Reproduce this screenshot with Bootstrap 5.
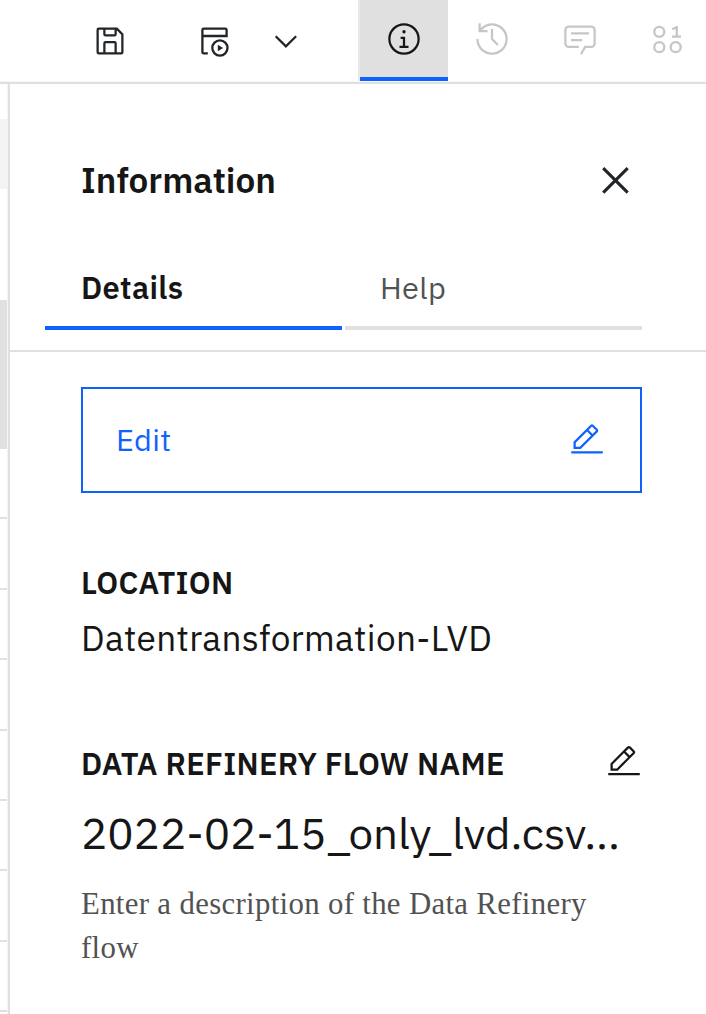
<!DOCTYPE html>
<html lang="en">
<head>
<meta charset="utf-8">
<meta name="viewport" content="width=device-width, initial-scale=1">
<title>Data Refinery</title>
<link rel="stylesheet" href="https://cdn.jsdelivr.net/npm/bootstrap@5.3.0/dist/css/bootstrap.min.css">
<style>
  :root { --ink:#161616; --muted:#525252; --line:#e0e0e0; --blue:#0f62fe; --off:#c6c6c6; }
  body { font-family:"IBM Plex Sans","Noto Sans",sans-serif; color:var(--ink); background:#fff; height:1014px; letter-spacing:.33px; }
  svg { display:block; flex:none; fill:currentColor; }
  button { color:inherit; letter-spacing:inherit; }
  .toolbar { height:84px; border-bottom:2px solid var(--line); box-shadow:inset 0 -1px #f6f6f6; }
  .tools { width:358px; padding-left:91.5px; }
  .tool-tab { width:88px; height:81px; padding-bottom:4px; color:var(--off); flex:none; }
  .tool-tab.active { width:90px; color:var(--ink); background:var(--line); border-left:2px solid #e8e8e8; box-shadow:inset 0 -4px var(--blue); }
  .grid-edge { width:7px; }
  .grid-edge .head { height:70px; margin-top:35px; background:#f4f4f4; }
  .grid-edge .sel { height:149px; margin-top:111px; background:var(--line); }
  .grid-edge .cells { height:565px; background:repeating-linear-gradient(#fff 0 68.4px,var(--line) 68.4px 70.4px); }
  .info-panel { margin-left:1px; border-left:2px solid var(--line); box-shadow:-1px 0 #f4f4f4; }
  .title-row { height:162px; padding:32px 66px 0 71px; }
  .title-row h1 { font-size:35.1px; line-height:44px; font-weight:600; letter-spacing:0; padding-bottom:2px; }
  .panel-tabs { gap:3px; padding:0 64px 20px 35px; border-bottom:2px solid var(--line); }
  .panel-tabs button { width:297px; height:84px; padding:2px 0 0 35px; border-bottom:4px solid var(--line)!important; font-size:30.8px; color:var(--muted); }
  .panel-tabs button.active { padding-left:36px; border-color:var(--blue)!important; color:var(--ink); font-weight:600; }
  .details { padding:35px 64px 0 71px; }
  .edit-btn { height:106px; border:2px solid var(--blue); color:var(--blue); padding:0 35.5px 0 33px; font-size:30.8px; }
  .edit-btn span { padding-bottom:2px; }
  .field-label { font-size:30.8px; line-height:44px; font-weight:600; white-space:nowrap; }
  .location { font-size:35.2px; line-height:50px; margin-top:9px; }
  .flow-name { font-size:44px; line-height:60px; margin-top:18px; white-space:nowrap; letter-spacing:-.09px; }
  .descr { font-family:"Liberation Serif",serif; font-size:30.8px; line-height:44px; color:var(--muted); margin-top:19px; }
</style>
</head>
<body class="d-flex flex-column overflow-hidden">
<header class="toolbar d-flex flex-shrink-0 overflow-hidden">
  <div class="tools d-flex align-items-center flex-shrink-0">
    <button class="btn p-0 border-0" aria-label="Save"><svg width="36" height="36" viewBox="0 0 32 32"><path d="M27.71,9.29l-5-5A1,1,0,0,0,22,4H6A2,2,0,0,0,4,6V26a2,2,0,0,0,2,2H26a2,2,0,0,0,2-2V10A1,1,0,0,0,27.71,9.29ZM12,6h8v4H12Zm8,20H12V18h8Zm2,0V18a2,2,0,0,0-2-2H12a2,2,0,0,0-2,2v8H6V6h4v4a2,2,0,0,0,2,2h8a2,2,0,0,0,2-2V6.41l4,4V26Z"/></svg></button>
    <button class="btn p-0 border-0" aria-label="Jobs" style="margin-left:69.5px"><svg width="36" height="36" viewBox="0 0 36 36"><g fill="none" stroke="currentColor" stroke-width="2.3"><path d="M10.8 30.3H6.4a1 1 0 0 1-1-1V7a1.3 1.3 0 0 1 1.3-1.3h21.6a1.3 1.3 0 0 1 1.3 1.3v6H5.4"/><circle cx="22.9" cy="25" r="7.6"/></g><path d="M20.8 21.8v6.4l5.3-3.2z"/></svg></button>
    <button class="btn p-0 border-0" aria-label="Job options" style="margin-left:35px"><svg width="36" height="36" viewBox="0 0 36 36"><path d="M7.7 13.2 17.9 23.4 28.1 13.2" fill="none" stroke="currentColor" stroke-width="2.3"/></svg></button>
  </div>
  <button class="tool-tab active btn border-top-0 border-bottom-0 border-end-0 rounded-0 d-flex align-items-center justify-content-center px-0 pt-0" aria-label="Information"><svg width="36" height="36" viewBox="0 0 32 32"><path d="M17 22V14H13v2h2v6H12v2h8V22zM16 8a1.5 1.5 0 1 0 1.5 1.5A1.5 1.5 0 0 0 16 8z"/><path d="M16,30A14,14,0,1,1,30,16,14,14,0,0,1,16,30ZM16,4A12,12,0,1,0,28,16,12,12,0,0,0,16,4Z"/></svg></button>
  <div class="tool-tab d-flex align-items-center justify-content-center"><svg width="36" height="36" viewBox="0 0 32 32"><path d="M20.59 22 15 16.41V7h2v8.58l5 5.01L20.59 22z"/><path d="M16,2A13.94,13.94,0,0,0,6,6.23V2H4v8h8V8H7.08A12,12,0,1,1,4,16H2A14,14,0,1,0,16,2Z"/></svg></div>
  <div class="tool-tab d-flex align-items-center justify-content-center"><svg width="36" height="36" viewBox="0 0 32 32"><path d="M17.74,30,16,29l4-7h6a2,2,0,0,0,2-2V8a2,2,0,0,0-2-2H6A2,2,0,0,0,4,8V20a2,2,0,0,0,2,2h9v2H6a4,4,0,0,1-4-4V8A4,4,0,0,1,6,4H26a4,4,0,0,1,4,4V20a4,4,0,0,1-4,4H21.16Z"/><path d="M8 10H24V12H8zM8 16H18V18H8z"/></svg></div>
  <div class="tool-tab d-flex align-items-center justify-content-center"><svg width="36" height="36" viewBox="0 0 36 36"><g fill="none" stroke="currentColor" stroke-width="2.3"><circle cx="9.3" cy="10.8" r="5"/><circle cx="9.3" cy="26.2" r="5"/><circle cx="25.7" cy="26.2" r="5"/><path d="M22.2 8.2l4.6-2M26.8 5v10.6M22 15.6h9"/></g></svg></div>
</header>
<div class="d-flex flex-grow-1">
  <div class="grid-edge flex-shrink-0">
    <div class="head"></div>
    <div class="sel"></div>
    <div class="cells"></div>
  </div>
  <main class="info-panel flex-grow-1">
    <div class="title-row d-flex align-items-center justify-content-between">
      <h1 class="m-0">Information</h1>
      <button class="btn p-0 border-0" aria-label="Close"><svg width="48" height="48" viewBox="0 0 48 48"><path d="M11.2 11.2 35.7 35.7M35.7 11.2 11.2 35.7" fill="none" stroke="currentColor" stroke-width="3.1"/></svg></button>
    </div>
    <div class="panel-tabs d-flex">
      <button class="btn active border-0 rounded-0 text-start">Details</button>
      <button class="btn border-0 rounded-0 text-start">Help</button>
    </div>
    <div class="details">
      <button class="edit-btn btn rounded-0 w-100 d-flex align-items-center justify-content-between"><span>Edit</span><svg width="36" height="36" viewBox="0 0 32 32"><path d="M2 26H30V28H2zM25.4 9c.8-.8.8-2 0-2.8l-3.6-3.6c-.8-.8-2-.8-2.8 0l-15 15V24h6.4L25.4 9zM20.4 4L24 7.6l-3 3L17.4 7 20.4 4zM6 22v-3.6l10-10 3.6 3.6-10 10H6z"/></svg></button>
      <div class="field-label" style="margin-top:67px">LOCATION</div>
      <div class="location">Datentransformation-LVD</div>
      <div class="d-flex justify-content-between" style="margin-top:78px">
        <div class="field-label">DATA REFINERY FLOW NAME</div>
        <svg class="mt-auto mb-auto" width="36" height="36" viewBox="0 1.2 32 32"><path d="M2 26H30V28H2zM25.4 9c.8-.8.8-2 0-2.8l-3.6-3.6c-.8-.8-2-.8-2.8 0l-15 15V24h6.4L25.4 9zM20.4 4L24 7.6l-3 3L17.4 7 20.4 4zM6 22v-3.6l10-10 3.6 3.6-10 10H6z"/></svg>
      </div>
      <div class="flow-name">2022-02-15_only_lvd.csv...</div>
      <div class="descr">Enter a description of the Data Refinery flow</div>
    </div>
  </main>
</div>
<script src="https://cdn.jsdelivr.net/npm/bootstrap@5.3.0/dist/js/bootstrap.bundle.min.js"></script>
</body>
</html>
